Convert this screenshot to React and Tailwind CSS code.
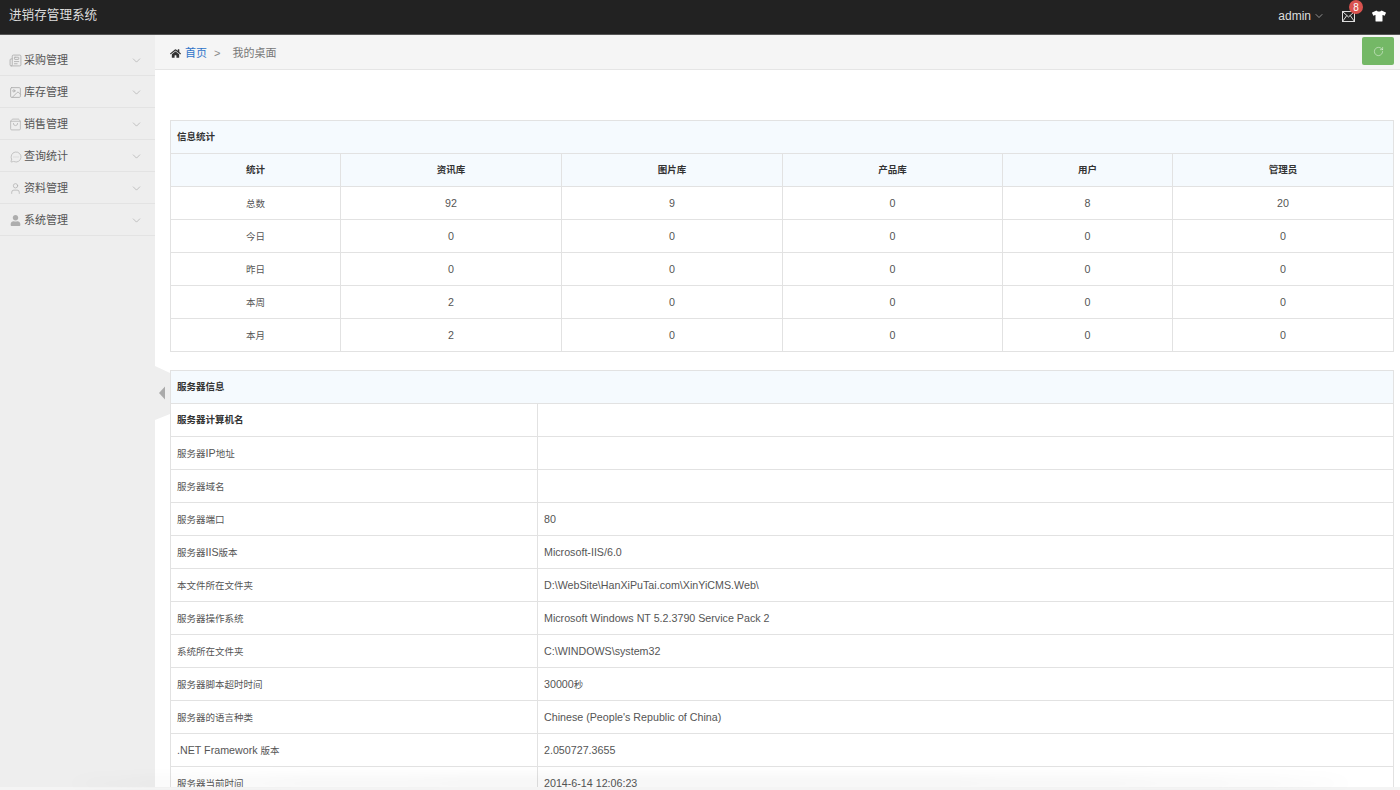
import React from 'react';
import { Newspaper, Image, ShoppingBag, MessageCircleMore, User, ChevronDown, RotateCw } from 'lucide-react';
import { FaHome, FaUser, FaTshirt } from 'react-icons/fa';

const FONT = '[font-family:"Liberation_Sans","Noto_Sans_CJK_SC",sans-serif]';

const menu = [
  { label: '采购管理', icon: <Newspaper size={13} strokeWidth={1.6} /> },
  { label: '库存管理', icon: <Image size={13} strokeWidth={1.6} /> },
  { label: '销售管理', icon: <ShoppingBag size={13} strokeWidth={1.3} /> },
  { label: '查询统计', icon: <MessageCircleMore size={12} strokeWidth={1.3} /> },
  { label: '资料管理', icon: <User size={13} strokeWidth={1.3} /> },
  { label: '系统管理', icon: <FaUser size={11} /> },
];

const statCols = ['资讯库', '图片库', '产品库', '用户', '管理员'];
const statRows = [
  ['总数', 92, 9, 0, 8, 20],
  ['今日', 0, 0, 0, 0, 0],
  ['昨日', 0, 0, 0, 0, 0],
  ['本周', 2, 0, 0, 0, 0],
  ['本月', 2, 0, 0, 0, 0],
];

const serverRows = [
  ['服务器IP地址', ''],
  ['服务器域名', ''],
  ['服务器端口', '80'],
  ['服务器IIS版本', 'Microsoft-IIS/6.0'],
  ['本文件所在文件夹', 'D:\\WebSite\\HanXiPuTai.com\\XinYiCMS.Web\\'],
  ['服务器操作系统', 'Microsoft Windows NT 5.2.3790 Service Pack 2'],
  ['系统所在文件夹', 'C:\\WINDOWS\\system32'],
  ['服务器脚本超时时间', '30000秒'],
  ['服务器的语言种类', "Chinese (People's Republic of China)"],
  ['.NET Framework 版本', '2.050727.3655'],
  ['服务器当前时间', '2014-6-14 12:06:23'],
];

const cell = 'border border-[#e2e2e2] h-[33px] p-0 pt-px';

// the chinese runs sit a bit smaller than the latin ones in these tables
function Mixed({ text }) {
  return String(text)
    .split(/([\u4e00-\u9fff]+)/)
    .map((part, i) => (i % 2 ? <span key={i} className="text-[9.5px]">{part}</span> : part));
}

function Sidebar() {
  return (
    <aside className="w-[155px] shrink-0 bg-[#eeeeee] pt-[9px]">
      {menu.map((item) => (
        <div key={item.label} className="h-8 flex items-center border-b border-[#e3e3e3] pl-[8px] pr-[12px] pt-[2px] text-[11px] text-[#555]">
          <span className="w-[15px] flex justify-center text-[#adadad]">{item.icon}</span>
          <span className="ml-px">{item.label}</span>
          <ChevronDown size={13} strokeWidth={1} className="ml-auto text-[#999]" />
        </div>
      ))}
    </aside>
  );
}

export default function App() {
  return (
    <div className={`h-screen overflow-hidden flex flex-col bg-white relative ${FONT}`}>
      <header className="h-[35px] shrink-0 bg-[#222222] border-b border-[#555] flex items-center pl-[9px] pr-[14px] pb-[3px]">
        <span className="text-[12.6px] text-[#ddd]">进销存管理系统</span>
        <div className="ml-auto flex items-center text-[#ddd]">
          <span className="text-[12px]">admin</span>
          <ChevronDown size={12} strokeWidth={1.2} className="ml-[2px]" />
          <div className="relative ml-[17px]">
            <svg width="13" height="11" viewBox="0 0 13 11" fill="none" stroke="currentColor" strokeWidth="1" className="block mt-[2px]">
              <rect x="0.5" y="0.5" width="12" height="10" />
              <path d="M0.5 0.5 L6.5 6 L12.5 0.5 M0.5 10.5 L4.8 4.5 M12.5 10.5 L8.2 4.5" />
            </svg>
            <span className="absolute -top-[9px] left-[7px] w-[14px] h-[14px] rounded-full bg-[#d9534f] text-white text-[10px] flex items-center justify-center">8</span>
          </div>
          <FaTshirt size={14} className="ml-[17px] text-white" />
        </div>
      </header>

      <div className="flex-1 flex min-h-0">
        <Sidebar />
        <main className="flex-1 min-w-0 relative">
          <div className="h-[35px] bg-[#f5f5f5] border-b border-[#e5e5e5] flex items-center pt-[2px] pl-[15px] pr-[6px] text-[11px] text-[#777]">
            <FaHome size={11} className="text-[#333]" />
            <span className="ml-[4px] text-[#2f74c8]">首页</span>
            <span className="ml-[7px] text-[#888]">&gt;</span>
            <span className="ml-[12px]">我的桌面</span>
            <button type="button" className="ml-auto self-start w-8 h-[28px] rounded-[2px] bg-[#74b866] flex items-center justify-center text-white">
              <RotateCw size={11} strokeWidth={1} />
            </button>
          </div>

          <div className="pt-[50px] pl-[15px] pr-[6px] text-[#555]">
            <table className="w-full table-fixed border-collapse text-[10.7px] text-center">
              <colgroup>
                <col className="w-[170px]" />
                <col className="w-[221px]" />
                <col className="w-[221px]" />
                <col className="w-[220px]" />
                <col className="w-[170px]" />
                <col />
              </colgroup>
              <thead>
                <tr className="bg-[#f5fafe] text-[#333]">
                  <th colSpan={6} className={`${cell} text-left pl-[6px] text-[9.5px] font-bold`}>信息统计</th>
                </tr>
                <tr className="bg-[#f5fafe] text-[#333]">
                  <th className={`${cell} text-[9.5px] font-bold`}>统计</th>
                  {statCols.map((c) => (
                    <th key={c} className={`${cell} text-[9.5px] font-bold`}>{c}</th>
                  ))}
                </tr>
              </thead>
              <tbody>
                {statRows.map((row) => (
                  <tr key={row[0]}>
                    {row.map((v, i) => (
                      <td key={i} className={cell}><Mixed text={v} /></td>
                    ))}
                  </tr>
                ))}
              </tbody>
            </table>

            <table className="mt-[18px] w-full table-fixed border-collapse text-[10.7px]">
              <colgroup>
                <col className="w-[367px]" />
                <col />
              </colgroup>
              <thead>
                <tr className="bg-[#f5fafe] text-[#333]">
                  <th colSpan={2} className={`${cell} text-left pl-[6px] text-[9.5px] font-bold`}>服务器信息</th>
                </tr>
              </thead>
              <tbody>
                <tr>
                  <td className={`${cell} pl-[6px] text-[9.5px] font-bold text-[#333]`}>服务器计算机名</td>
                  <td className={cell}></td>
                </tr>
                {serverRows.map(([k, v]) => (
                  <tr key={k}>
                    <td className={`${cell} pl-[6px]`}><Mixed text={k} /></td>
                    <td className={`${cell} pl-[6px]`}><Mixed text={v} /></td>
                  </tr>
                ))}
              </tbody>
            </table>
          </div>

          <svg width="15" height="54" viewBox="0 0 15 54" className="absolute left-0 top-[331px]">
            <path d="M0 0 L15 7 L15 48 L0 54 Z" fill="#eeeeee" />
            <path d="M4 27 L10 20.5 L10 33.5 Z" fill="#aaaaaa" />
          </svg>
        </main>
      </div>

      {/* strip with shadow along the bottom edge */}
      <div className="absolute left-0 right-0 bottom-0 h-[3px] bg-[#f4f4f4]">
        <div className="absolute left-[70px] right-[50px] bottom-0 h-[3px] rounded-[50%] shadow-[0_-5px_16px_rgba(0,0,0,0.22)]"></div>
      </div>
    </div>
  );
}
